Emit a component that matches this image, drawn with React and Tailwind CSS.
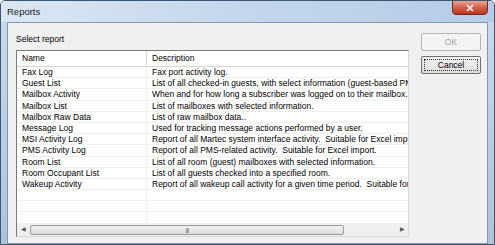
import { X } from "lucide-react"

const reports = [
  { name: "Fax Log", desc: "Fax port activity log." },
  { name: "Guest List", desc: "List of all checked-in guests, with select information (guest-based PMS data)." },
  { name: "Mailbox Activity", desc: "When and for how long a subscriber was logged on to their mailbox." },
  { name: "Mailbox List", desc: "List of mailboxes with selected information." },
  { name: "Mailbox Raw Data", desc: "List of raw mailbox data.." },
  { name: "Message Log", desc: "Used for tracking message actions performed by a user." },
  { name: "MSI Activity Log", desc: "Report of all Martec system interface activity.  Suitable for Excel import." },
  { name: "PMS Activity Log", desc: "Report of all PMS-related activity.  Suitable for Excel import." },
  { name: "Room List", desc: "List of all room (guest) mailboxes with selected information." },
  { name: "Room Occupant List", desc: "List of all guests checked into a specified room." },
  { name: "Wakeup Activity", desc: "Report of all wakeup call activity for a given time period.  Suitable for Excel import." },
  { name: "", desc: "" },
  { name: "", desc: "" },
  { name: "", desc: "" },
]

export default function App() {
  return (
    <div
      className="w-[495px] h-[245px] flex flex-col bg-gradient-to-b from-[#c9daed] to-[#adc3dd] border border-[#3f5670] rounded-t-[5px] overflow-hidden text-black"
      style={{ fontFamily: '"Liberation Sans", Arial, sans-serif' }}
    >
      {/* Title bar */}
      <div className="h-[21px] flex items-start justify-between pl-[6px] pr-[6px] shrink-0 bg-gradient-to-r from-[#dbe7f4] via-[#c3d6eb] to-[#b6cce6]">
        <span className="text-[9.5px] leading-none mt-[6px] text-[#1a1a1a]">Reports</span>
        <div className="w-[36px] h-[15px] -mt-px flex items-center justify-center rounded-b-[4px] border border-[#6e2b20] bg-gradient-to-b from-[#e8a593] via-[#d2604a] to-[#b8321f]">
          <X className="w-[10px] h-[10px] text-white" strokeWidth={4} />
        </div>
      </div>

      {/* Client area */}
      <div className="flex-1 flex px-[6px] pb-[7px]">
        <div className="flex-1 flex bg-[#f0f0f0] border border-[#8596ad] pl-[8px] pt-[10px] pb-[6px]">
          {/* Left column */}
          <div className="w-[393px] flex flex-col">
            <div className="text-[8.5px] leading-[10px] h-[17px] pt-px">Select report</div>
            <div className="flex-1 flex flex-col bg-white border border-t-[#7a7a7a] border-l-[#7a7a7a] border-r-[#d8d8d8] border-b-[#d8d8d8] overflow-hidden">
              {/* Header */}
              <div className="h-[16px] flex shrink-0 border-b border-[#d5d5d5] bg-white text-[8.5px]">
                <div className="w-[130px] pl-[5px] flex items-center border-r border-[#d5d5d5]">Name</div>
                <div className="flex-1 pl-[5px] flex items-center">Description</div>
              </div>
              {/* Rows */}
              <div className="flex-1 overflow-hidden">
                {reports.map((r, i) => (
                  <div key={i} className="h-[11.2px] flex border-b border-[#f0f0f0] text-[8.5px] leading-[10px] whitespace-pre">
                    <div className="w-[130px] pl-[5px] border-r border-[#f0f0f0] overflow-hidden">{r.name}</div>
                    <div className="flex-1 pl-[5px] overflow-hidden">{r.desc}</div>
                  </div>
                ))}
              </div>
              {/* Horizontal scrollbar */}
              <div className="h-[12px] flex shrink-0 bg-[#f0f0f0] items-stretch">
                <div className="w-[12px] flex items-center justify-center text-[6px] text-[#555]">◀</div>
                <div className="flex-1 flex px-[1px] py-px">
                  <div className="w-[314px] rounded-[2px] border border-[#9a9a9a] bg-gradient-to-b from-[#f4f4f4] to-[#dcdcdc] flex items-center justify-center">
                    <span className="text-[6px] leading-none text-[#555] tracking-[-0.5px]">|||</span>
                  </div>
                </div>
                <div className="w-[12px] flex items-center justify-center text-[6px] text-[#555]">▶</div>
              </div>
            </div>
          </div>

          {/* Buttons */}
          <div className="ml-[12px] flex flex-col gap-[5px]">
            <div className="w-[60px] h-[18px] flex items-center justify-center border border-[#b5b5b5] rounded-[2px] bg-[#f4f4f4] text-[8.5px] text-[#a0a0a0]">
              OK
            </div>
            <div className="w-[60px] h-[18px] flex items-center justify-center border border-[#707070] rounded-[2px] bg-gradient-to-b from-[#f2f2f2] to-[#dddddd] p-[2px]">
              <div className="w-full h-full flex items-center justify-center border border-dotted border-[#333] text-[8.5px]">Cancel</div>
            </div>
          </div>
        </div>
      </div>
    </div>
  )
}
